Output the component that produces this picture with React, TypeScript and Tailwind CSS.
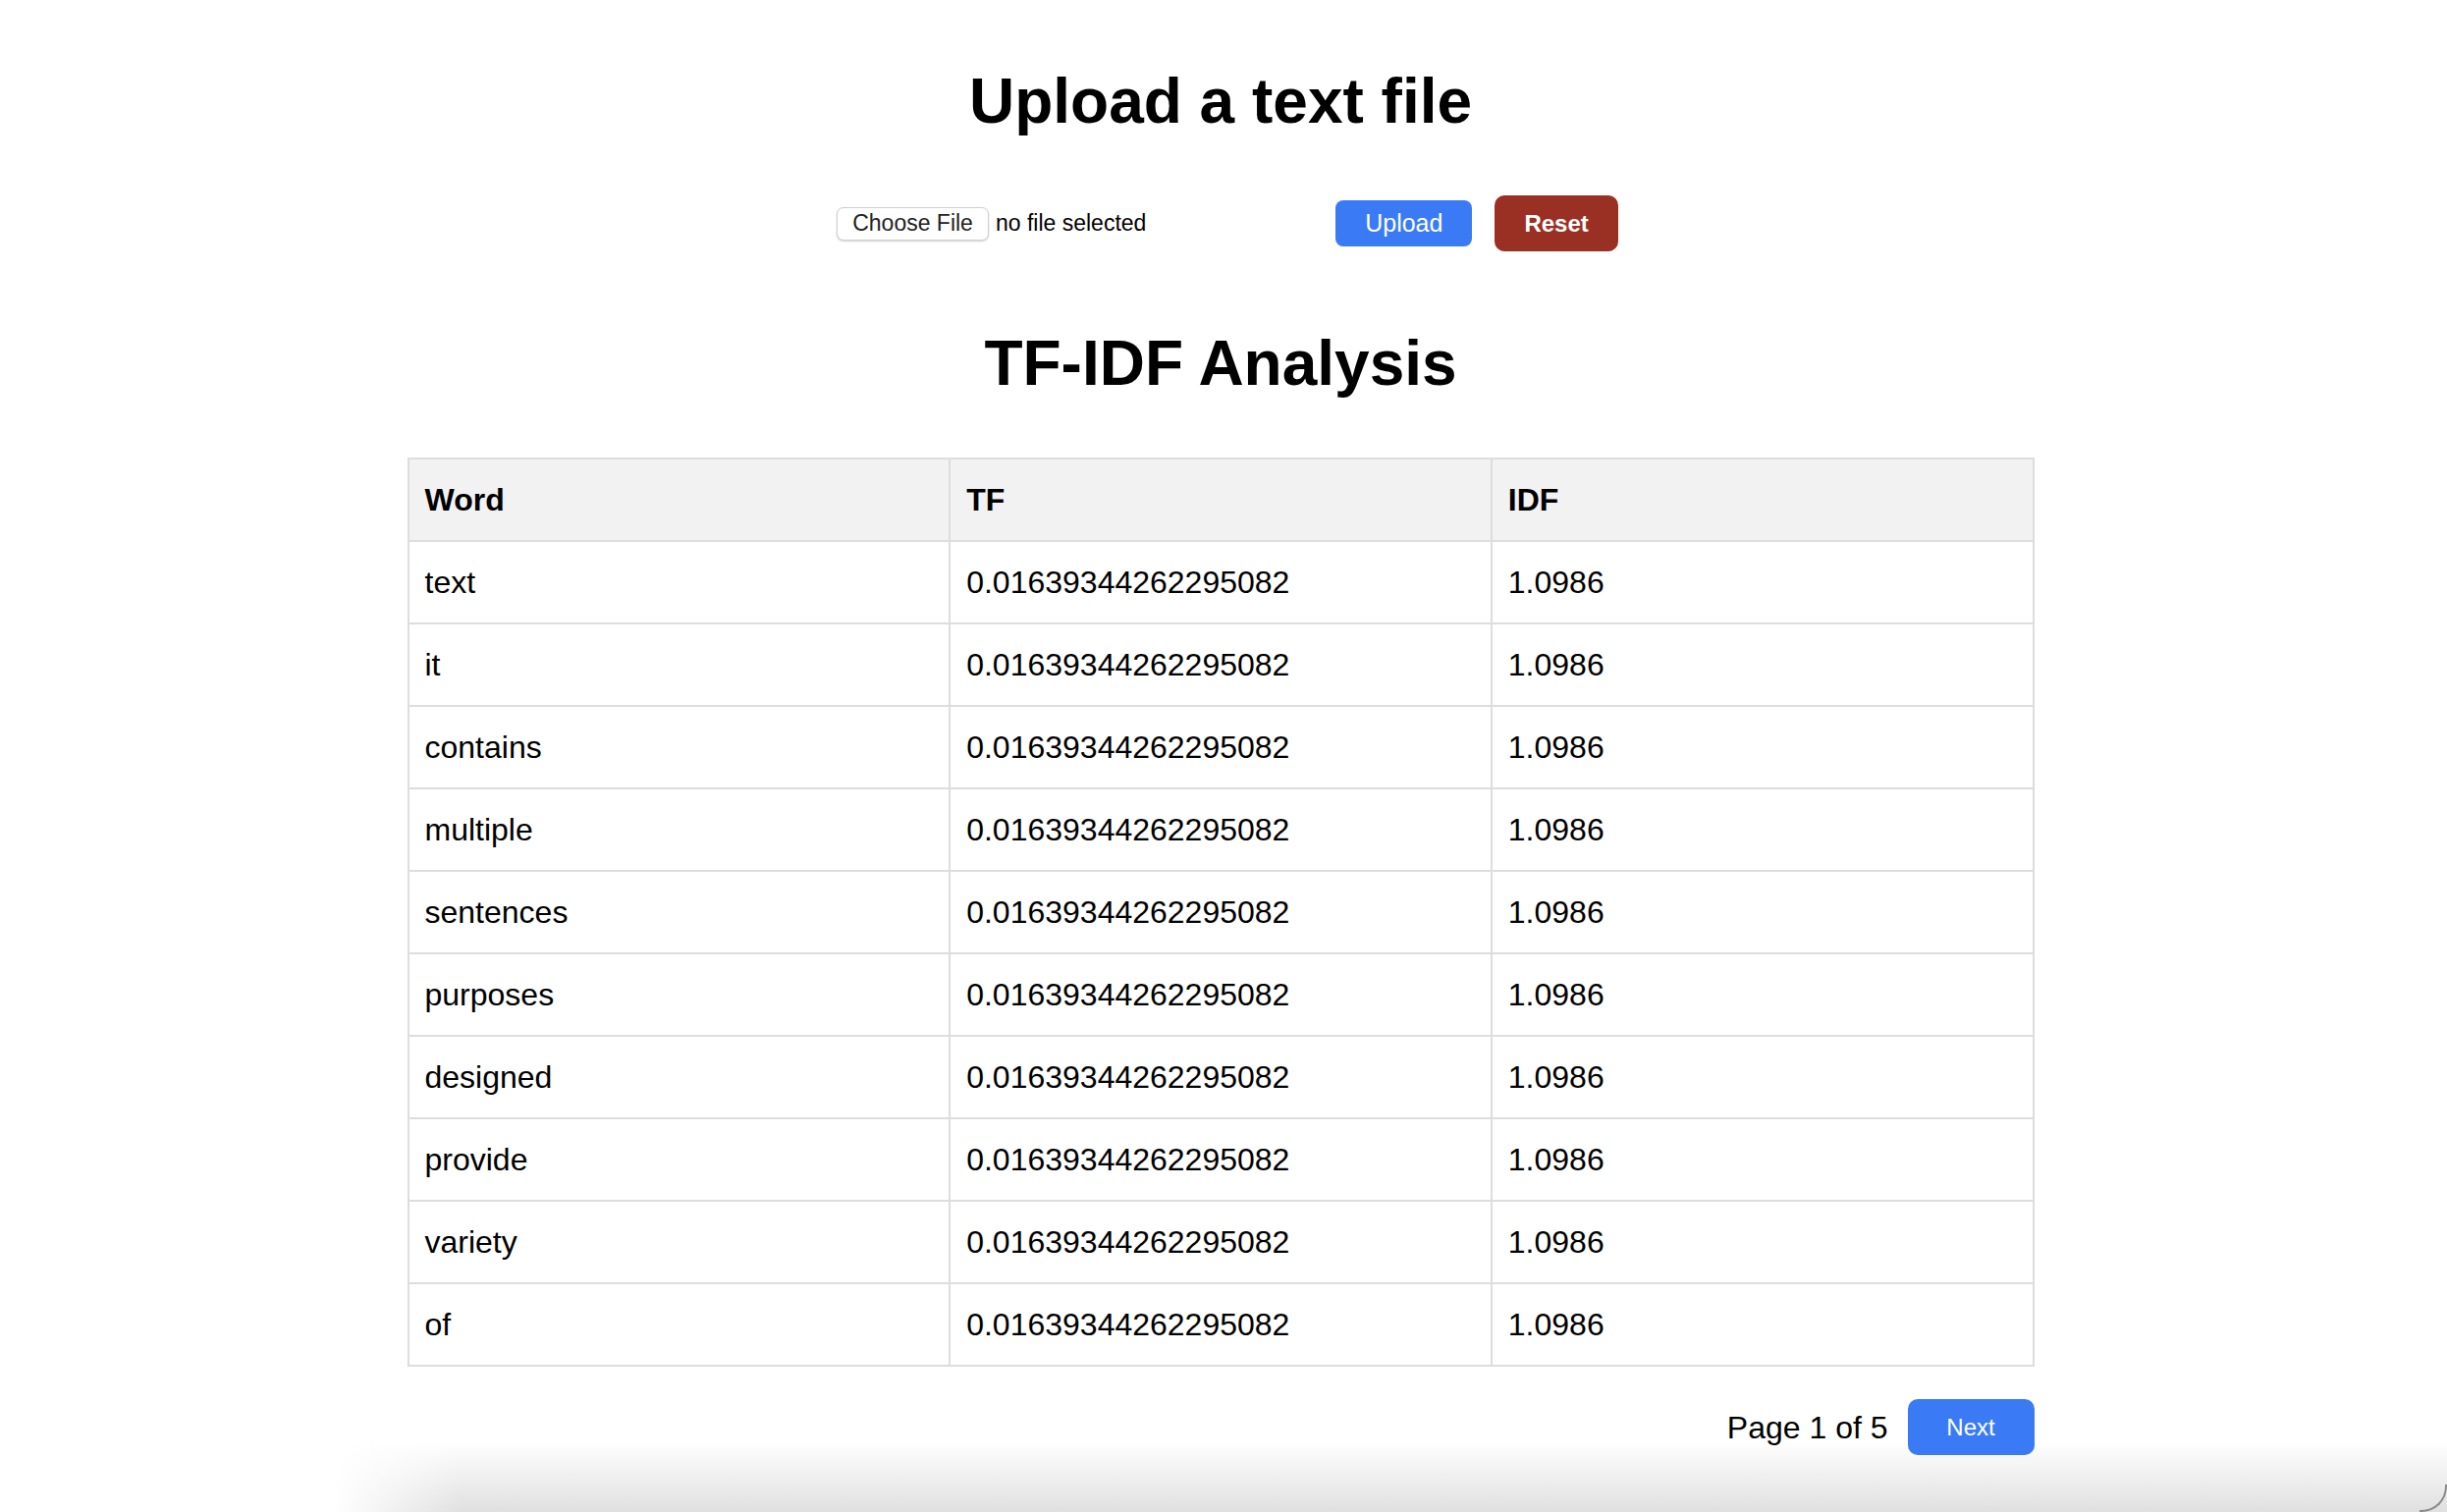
import React from 'react';

const WORDS = [
  'text',
  'it',
  'contains',
  'multiple',
  'sentences',
  'purposes',
  'designed',
  'provide',
  'variety',
  'of',
];

const TF = '0.01639344262295082';
const IDF = '1.0986';

export default function App() {
  const cell = 'border-2 border-[#dddddd] px-[16px] py-[22px] text-left leading-[38px]';

  return (
    <div className="relative min-h-screen w-full overflow-hidden bg-white text-black font-['Liberation_Sans',Arial,sans-serif]">
      {/* window shadow along the bottom edge of the capture */}
      <div className="pointer-events-none absolute inset-x-0 bottom-0 h-[72px] bg-linear-to-b from-transparent to-[#e0e0e0] [mask-image:linear-gradient(to_right,transparent_340px,black_470px)]" />
      <div className="pointer-events-none absolute bottom-0 right-0 h-[28px] w-[28px] rounded-br-[26px] border-r-2 border-b-2 border-[#8a8a8a]" />

      <div className="relative flex flex-col items-center pt-[66px] pr-[6px]">
        <h1 className="text-[64px] font-bold leading-[74px]">Upload a text file</h1>

        {/* upload form */}
        <div className="mt-[59px] ml-[14px] flex items-center">
          <div className="mr-[22px] flex w-[486px] items-center">
            <button className="h-[34px] rounded-[7px] border border-[#d0d0d0] bg-white px-[15px] text-[23px] leading-none text-[#222] shadow-[0_1px_2px_rgba(0,0,0,0.18)]">
              Choose File
            </button>
            <span className="ml-[7px] text-[23px]">no file selected</span>
          </div>
          <button className="h-[47px] rounded-[8px] bg-[#3a7bf5] px-[30px] text-[25px] text-white">
            Upload
          </button>
          <button className="ml-[23px] h-[57px] rounded-[10px] bg-[#9a3024] px-[30px] text-[24px] font-bold text-white">
            Reset
          </button>
        </div>

        <h2 className="mt-[77px] text-[64px] font-bold leading-[74px]">TF-IDF Analysis</h2>

        <table className="mt-[59px] w-[1657px] table-fixed border-collapse text-[32px]">
          <thead>
            <tr className="bg-[#f2f2f2]">
              <th className={cell + ' font-bold'}>Word</th>
              <th className={cell + ' font-bold'}>TF</th>
              <th className={cell + ' font-bold'}>IDF</th>
            </tr>
          </thead>
          <tbody>
            {WORDS.map((w) => (
              <tr key={w}>
                <td className={cell}>{w}</td>
                <td className={cell}>{TF}</td>
                <td className={cell}>{IDF}</td>
              </tr>
            ))}
          </tbody>
        </table>

        <div className="mt-[33px] flex w-[1657px] items-center justify-end gap-[20px]">
          <span className="text-[32px]">Page 1 of 5</span>
          <button className="h-[57px] w-[129px] rounded-[10px] bg-[#3a7bf5] text-[24px] text-white">Next</button>
        </div>
      </div>
    </div>
  );
}
